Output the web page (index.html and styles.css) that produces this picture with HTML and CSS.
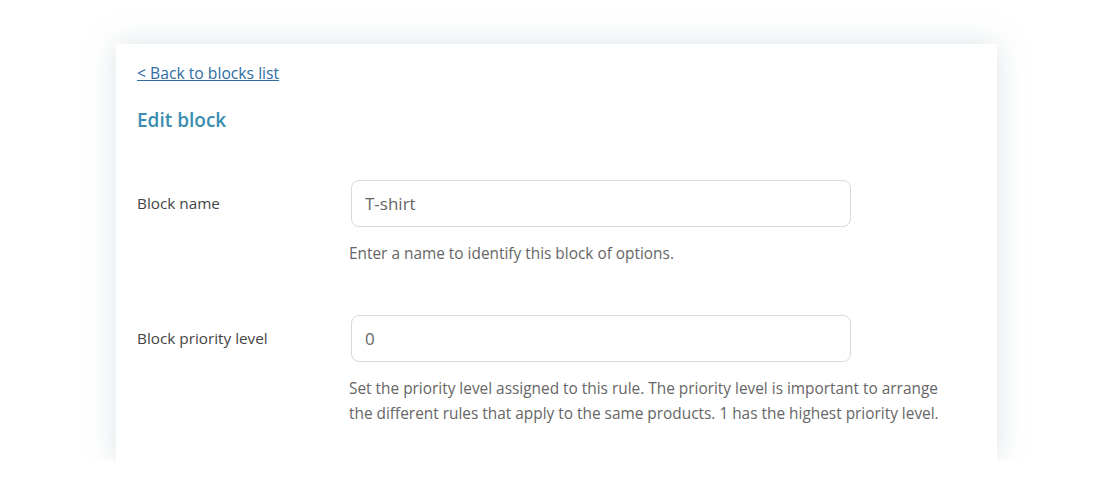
FILE: index.html
```html
<!DOCTYPE html>
<html lang="en">

<head>
    <meta charset="UTF-8" />
    <meta name="viewport" content="width=device-width, initial-scale=1.0" />
    <title>Edit block</title>
    <link rel="stylesheet" href="styles.css">
</head>

<body>

    <div class="card">
        <a class="back" href="#">&lt; Back to blocks list</a>
        <h2>Edit block</h2>

        <div class="field">
            <label for="blockName">Block name</label>
            <div class="control">
                <input type="text" id="blockName" value="T-shirt" />
                <p class="help">Enter a name to identify this block of options.</p>
            </div>
        </div>

        <div class="field">
            <label for="blockPriority">Block priority level</label>
            <div class="control">
                <input type="text" id="blockPriority" value="0" />
                <p class="help">Set the priority level assigned to this rule. The priority level is important to arrange
                    the different rules that apply to the same products. 1 has the highest priority level.</p>
            </div>
        </div>
    </div>

</body>

</html>
```

FILE: styles.css
```css
body {
    font-family: "Open Sans", "Segoe UI", Arial, sans-serif;
    background-color: #ffffff;
    margin: 0;
    padding: 44px 0 0 116px;
}

.card {
    background-color: #ffffff;
    width: 881px;
    height: 417px;
    box-sizing: border-box;
    padding: 18px 21px;
    box-shadow: 0 0 28px rgba(160, 185, 195, 0.38);
}

.back {
    display: inline-block;
    color: #2e6da4;
    font-size: 15.7px;
    line-height: 22px;
}

h2 {
    color: #3b8db0;
    font-size: 19px;
    font-weight: 600;
    margin: 23px 0 0;
    line-height: 26px;
}

.field {
    display: flex;
    align-items: flex-start;
}

.field:first-of-type {
    margin-top: 47px;
}

.field + .field {
    margin-top: 49px;
}

.field label {
    width: 214px;
    flex-shrink: 0;
    color: #444;
    font-size: 15.3px;
    line-height: 47px;
}

.control {
    width: 600px;
}

input {
    width: 500px;
    height: 47px;
    box-sizing: border-box;
    border: 1px solid #d9d9d9;
    border-radius: 8px;
    padding: 0 13px;
    font-family: inherit;
    font-size: 17px;
    color: #666;
    outline: none;
}

.help {
    color: #666;
    font-size: 15.4px;
    line-height: 25px;
    margin: 14px 0 0 -2px;
}
```
